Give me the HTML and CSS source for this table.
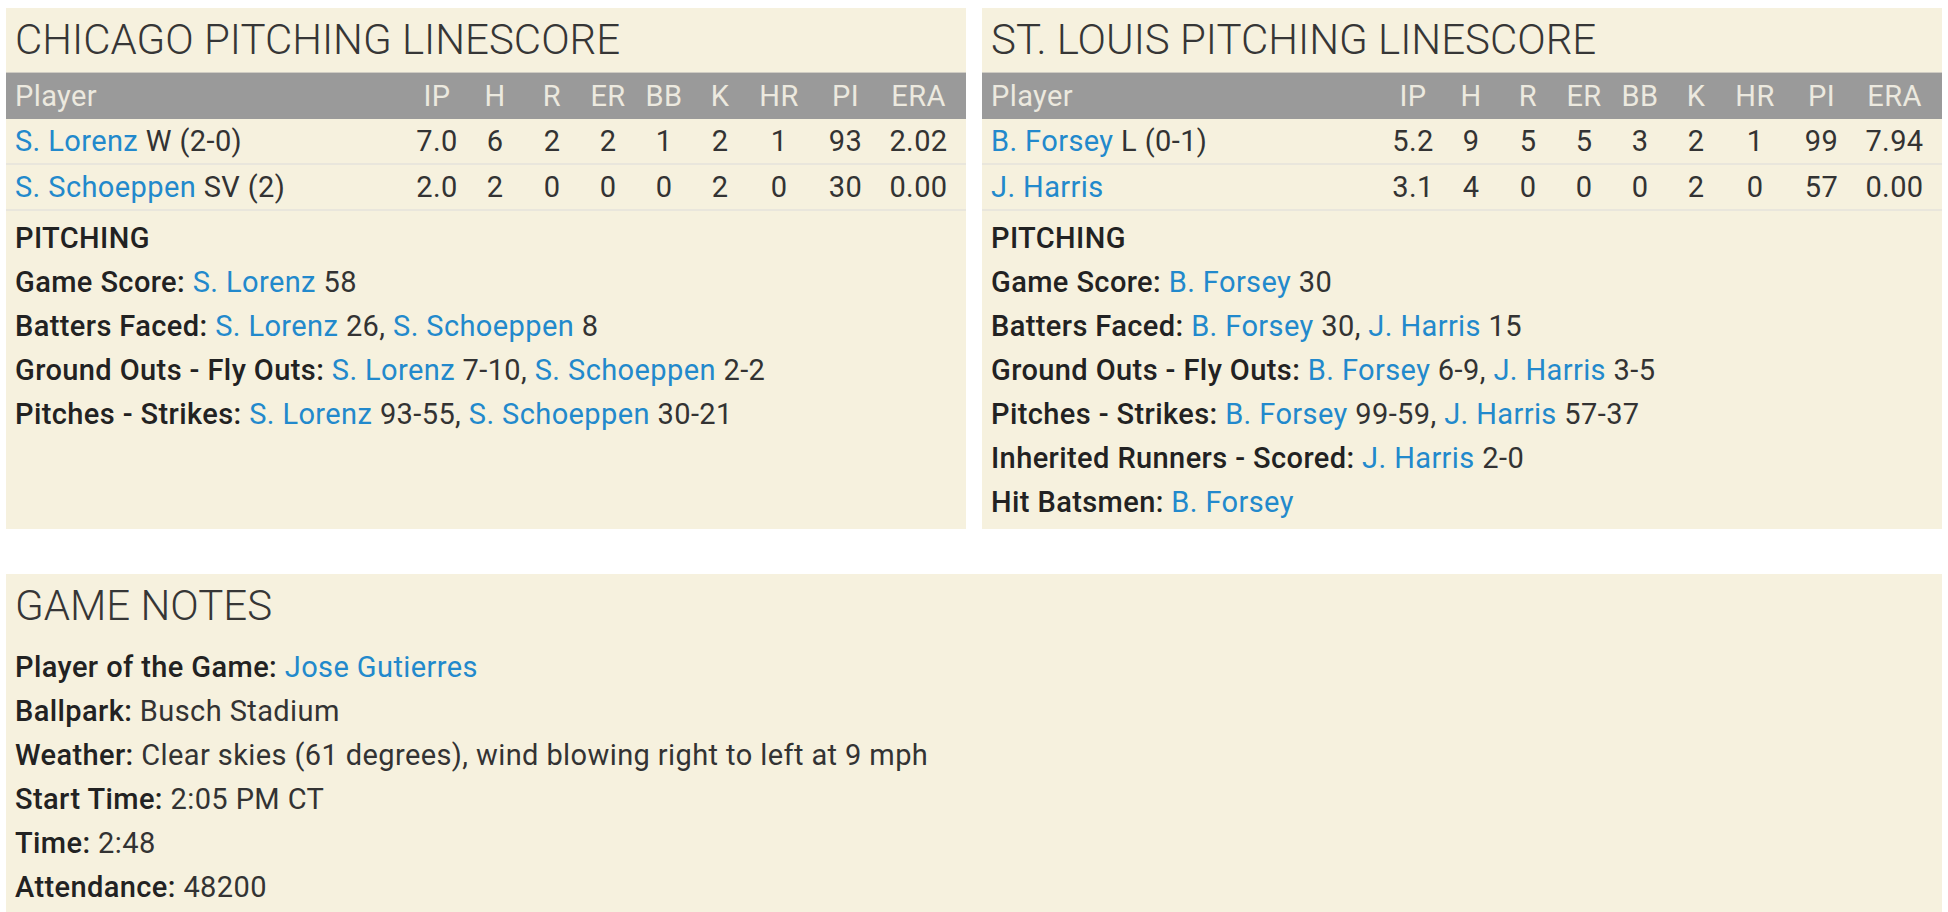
FILE: index.html
```html
<!DOCTYPE html>
<html lang="en">
<head>
<meta charset="utf-8">
<title>Pitching Linescore</title>
<link rel="stylesheet" href="styles.css">
</head>
<body>
<div class="page">
  <div class="top-row">
    <section class="panel">
      <h2 class="panel-title">CHICAGO PITCHING LINESCORE</h2>
      <div class="linescore">
        <div class="ls-row ls-head">
          <span class="c-player">Player</span><span>IP</span><span>H</span><span>R</span><span>ER</span><span>BB</span><span>K</span><span>HR</span><span>PI</span><span>ERA</span>
        </div>
        <div class="ls-row">
          <span class="c-player"><a href="#">S. Lorenz</a> W (2-0)</span><span>7.0</span><span>6</span><span>2</span><span>2</span><span>1</span><span>2</span><span>1</span><span>93</span><span>2.02</span>
        </div>
        <div class="ls-row">
          <span class="c-player"><a href="#">S. Schoeppen</a> SV (2)</span><span>2.0</span><span>2</span><span>0</span><span>0</span><span>0</span><span>2</span><span>0</span><span>30</span><span>0.00</span>
        </div>
      </div>
      <div class="notes">
        <div class="notes-head">PITCHING</div>
        <div class="note"><b>Game Score:</b> <a href="#">S. Lorenz</a> 58</div>
        <div class="note"><b>Batters Faced:</b> <a href="#">S. Lorenz</a> 26, <a href="#">S. Schoeppen</a> 8</div>
        <div class="note"><b>Ground Outs - Fly Outs:</b> <a href="#">S. Lorenz</a> 7-10, <a href="#">S. Schoeppen</a> 2-2</div>
        <div class="note"><b>Pitches - Strikes:</b> <a href="#">S. Lorenz</a> 93-55, <a href="#">S. Schoeppen</a> 30-21</div>
      </div>
    </section>
    <section class="panel">
      <h2 class="panel-title">ST. LOUIS PITCHING LINESCORE</h2>
      <div class="linescore">
        <div class="ls-row ls-head">
          <span class="c-player">Player</span><span>IP</span><span>H</span><span>R</span><span>ER</span><span>BB</span><span>K</span><span>HR</span><span>PI</span><span>ERA</span>
        </div>
        <div class="ls-row">
          <span class="c-player"><a href="#">B. Forsey</a> L (0-1)</span><span>5.2</span><span>9</span><span>5</span><span>5</span><span>3</span><span>2</span><span>1</span><span>99</span><span>7.94</span>
        </div>
        <div class="ls-row">
          <span class="c-player"><a href="#">J. Harris</a></span><span>3.1</span><span>4</span><span>0</span><span>0</span><span>0</span><span>2</span><span>0</span><span>57</span><span>0.00</span>
        </div>
      </div>
      <div class="notes">
        <div class="notes-head">PITCHING</div>
        <div class="note"><b>Game Score:</b> <a href="#">B. Forsey</a> 30</div>
        <div class="note"><b>Batters Faced:</b> <a href="#">B. Forsey</a> 30, <a href="#">J. Harris</a> 15</div>
        <div class="note"><b>Ground Outs - Fly Outs:</b> <a href="#">B. Forsey</a> 6-9, <a href="#">J. Harris</a> 3-5</div>
        <div class="note"><b>Pitches - Strikes:</b> <a href="#">B. Forsey</a> 99-59, <a href="#">J. Harris</a> 57-37</div>
        <div class="note"><b>Inherited Runners - Scored:</b> <a href="#">J. Harris</a> 2-0</div>
        <div class="note"><b>Hit Batsmen:</b> <a href="#">B. Forsey</a></div>
      </div>
    </section>
  </div>
  <section class="panel panel-wide">
    <h2 class="panel-title">GAME NOTES</h2>
    <div class="notes notes-game">
      <div class="note"><b>Player of the Game:</b> <a href="#">Jose Gutierres</a></div>
      <div class="note"><b>Ballpark:</b> Busch Stadium</div>
      <div class="note"><b>Weather:</b> Clear skies (61 degrees), wind blowing right to left at 9 mph</div>
      <div class="note"><b>Start Time:</b> 2:05 PM CT</div>
      <div class="note"><b>Time:</b> 2:48</div>
      <div class="note"><b>Attendance:</b> 48200</div>
    </div>
  </section>
</div>
</body>
</html>
```

FILE: styles.css
```css
html, body {
  margin: 0;
  padding: 0;
  background: #ffffff;
}

body {
  font-family: Roboto, "Liberation Sans", sans-serif;
  font-size: 29px;
  letter-spacing: 0.4px;
  color: #333333;
}

.page {
  padding: 8px 6px 0 6px;
}

.top-row {
  display: flex;
  gap: 16px;
  margin-bottom: 45px;
}

.panel {
  flex: 1 1 0;
  background: #f6f1de;
  min-width: 0;
}

.panel-wide {
  min-height: 340px;
}

.panel-title {
  margin: 0;
  padding: 0 9px;
  height: 64px;
  line-height: 64px;
  font-size: 42px;
  letter-spacing: 0;
  font-weight: 300;
  color: #363636;
  white-space: nowrap;
}

.ls-row {
  display: grid;
  grid-template-columns: 1fr 58px 58px 56px 56px 56px 56px 62px 71px 75px;
  padding-right: 10px;
  height: 44px;
  line-height: 44px;
  border-bottom: 2px solid #e9e6dc;
  color: #333333;
}

.ls-row > span {
  text-align: center;
  white-space: nowrap;
}

.ls-row > .c-player {
  text-align: left;
  padding-left: 9px;
}

.ls-head {
  background: #9a9a9a;
  color: #ece9df;
  border-top: 1px solid #cfccc3;
  border-bottom: 0;
  height: 46px;
  line-height: 46px;
}

a {
  color: #2289cc;
  text-decoration: none;
}

.notes {
  padding: 5px 9px 5px 9px;
}

.notes-game {
  padding-top: 7px;
}

.notes-head,
.note {
  line-height: 44px;
  white-space: nowrap;
}

.notes-head {
  font-weight: 500;
  color: #222222;
}

.note b {
  font-weight: 500;
  color: #222222;
}
```
